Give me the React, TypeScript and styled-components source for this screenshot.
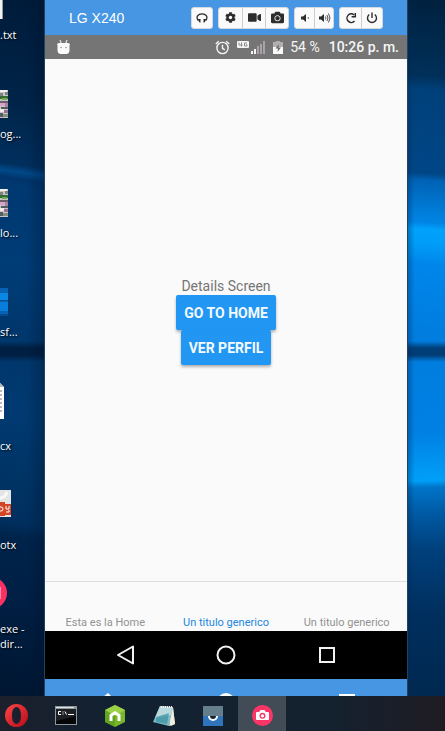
import React from "react";
import styled, { createGlobalStyle } from "styled-components";
import { FaCog, FaVideo, FaCamera } from "react-icons/fa";

const GlobalStyle = createGlobalStyle`
  *, *::before, *::after { box-sizing: border-box; }
  body { margin: 0; font-family: Roboto, sans-serif; background: #001c3a; }
  button { font: inherit; border: 0; padding: 0; margin: 0; background: none; cursor: pointer; }
  svg { display: block; flex: none; }
`;

const Desktop = styled.div`
  display: grid;
  grid-template-rows: minmax(0, 1fr) 35px;
  height: 100vh;
  overflow: hidden;
`;

const Workspace = styled.div`
  display: grid;
  grid-template-columns: 45px minmax(0, 1fr) 38px;
  min-height: 0;
`;

const IconColumn = styled.div`
  display: flex;
  flex-direction: column;
  justify-content: flex-end;
  min-height: 0;
  overflow: hidden;
  padding-bottom: 45px;
  border-right: 1px solid #24425e;
  background:
    linear-gradient(90deg, transparent 60%, rgba(0, 15, 40, 0.3)),
    linear-gradient(transparent 49%, #001f42 50%, #001f42 51%, transparent 52%),
    linear-gradient(188deg, transparent 24%, rgba(0, 88, 160, 0.6) 25%, transparent 26%),
    linear-gradient(188deg, #001b3a 0%, #002448 15%, #002f5e 24%, #003870 27%, #003c76 38%, #00376c 49%, #003a70 60%, #002f5e 75%, #00244c 77%, #001f44 86%, #001631 100%);
`;

const Wallpaper = styled.div`
  border-left: 1px solid #24425e;
  background:
    linear-gradient(90deg, rgba(0, 40, 84, 0.35), transparent 18%),
    linear-gradient(transparent 49%, #003f78 50%, #003c74 51%, transparent 52%),
    linear-gradient(184deg, #00213f 0%, #003059 11%, #00407a 13%, #004687 25%, #0062b4 26%, #0080de 31%, #0084e4 32%, #00a2fb 33%, #009df8 35%, #0086ea 38%, #007ddf 48%, transparent 52%),
    linear-gradient(178deg, #007ee0 52%, #0080e3 62%, #009ff8 69%, #0074c8 70%, #0058a2 74%, #00407c 79%, #002f5e 88%, #002850 100%);
`;

const Shortcut = styled.div`
  display: flex;
  flex-direction: column;
  flex: none;
  height: 99px;
`;

const ShortcutArt = styled.div<{ $low?: boolean }>`
  display: flex;
  align-items: flex-end;
  height: ${(p) => (p.$low ? 65 : 61)}px;
  margin-bottom: ${(p) => (p.$low ? 4 : 8)}px;
`;

const ShortcutLabel = styled.span`
  color: #fff;
  font: 11px/15px "Open Sans", "Noto Sans", sans-serif;
  text-shadow: 1px 1px 2px #000;
  white-space: pre;
`;

const Phone = styled.main`
  display: flex;
  flex-direction: column;
  min-height: 0;
  overflow: hidden;
  background: #fafafa;
`;

const TitleBar = styled.header`
  display: flex;
  align-items: center;
  justify-content: space-between;
  flex: none;
  height: 35px;
  padding: 0 24px;
  background: #4696e3;
`;

const DeviceName = styled.h1`
  margin: 0;
  color: #fff;
  font: 14px/20px "Liberation Sans", sans-serif;
`;

const Toolbar = styled.div`
  display: flex;
  gap: 5px;
`;

const ToolGroup = styled.div`
  display: flex;
  overflow: hidden;
  border: 1px solid #d3d9df;
  border-radius: 3px;
  background: #fafafa;
`;

const ToolButton = styled.button<{ $width: number }>`
  display: flex;
  align-items: center;
  justify-content: center;
  width: ${(p) => p.$width}px;
  height: 20px;
  color: #2d2d2d;

  & + & {
    border-left: 1px solid #ccc;
  }
`;

const StatusBar = styled.div`
  display: flex;
  align-items: center;
  flex: none;
  height: 24px;
  padding: 0 8px 0 12px;
  background: #757575;
  color: #f6f6f6;
  font-size: 14px;
  line-height: 20px;
  white-space: nowrap;
`;

const StatusInfo = styled.div`
  display: flex;
  align-items: center;
  gap: 7px;
  margin-left: auto;
`;

const Clock = styled.time`
  margin-left: 2px;
  font-weight: 500;
`;

const Screen = styled.section`
  display: flex;
  flex: 1;
  flex-direction: column;
  align-items: center;
  justify-content: center;
  min-height: 0;
  padding-top: 2px;
`;

const ScreenText = styled.p`
  margin: 0;
  color: #757575;
  font-size: 14px;
  line-height: 18px;
`;

const ActionButton = styled.button`
  height: 35px;
  padding: 0 8px;
  border-radius: 2px;
  background: #2196f3;
  box-shadow: 0 2px 3px rgba(0, 0, 0, 0.3);
  color: #f4faff;
  font-size: 14px;
  font-weight: 700;
  line-height: 20px;
  text-transform: uppercase;
`;

const TabBar = styled.nav`
  display: grid;
  grid-template-columns: repeat(3, 1fr);
  flex: none;
  height: 50px;
  border-top: 1px solid #dedede;
`;

const Tab = styled.button<{ $active?: boolean }>`
  display: flex;
  align-items: flex-end;
  justify-content: center;
  color: ${(p) => (p.$active ? "#2187e0" : "#929292")};
  font-size: 11px;
  line-height: 16px;
`;

const SystemBar = styled.nav`
  display: grid;
  grid-template-columns: repeat(3, 1fr);
  flex: none;
  height: 48px;
  padding: 0 30px;
  background: #000;
`;

const MirrorBar = styled.nav`
  display: grid;
  grid-template-columns: repeat(3, 1fr);
  flex: none;
  height: 17px;
  overflow: hidden;
  background: #4696e3;
`;

const NavKey = styled.button<{ $top?: boolean }>`
  display: flex;
  align-items: ${(p) => (p.$top ? "flex-start" : "center")};
  justify-content: center;
  padding-top: ${(p) => (p.$top ? 14 : 0)}px;
  color: #f2f2f2;
`;

const Taskbar = styled.footer`
  display: flex;
  gap: 1px;
  background: linear-gradient(90deg, #1b202c, #122131 25%, #14212e 75%, #201c23);
`;

const TaskButton = styled.button<{ $active?: boolean }>`
  display: flex;
  align-items: center;
  justify-content: center;
  width: 48px;
  padding-top: 4px;
  background: ${(p) => (p.$active ? "#414c57" : "transparent")};

  &:first-child {
    width: 33px;
    margin-right: 8px;
  }
`;

const PhotoStack = () => (
  <svg width="8" height="28" viewBox="0 0 8 28" aria-hidden="true">
    <path d="M0 0h8v28H0z" fill="#c9c4c4" />
    <path d="M0 0h7v2H0z" fill="#f2f0ee" />
    <path d="M0 3h3v3H0zM5 2h3v3H5z" fill="#7d8580" />
    <path d="M0 6h8v3H0z" fill="#346b37" />
    <path d="M2 8h5v2H2z" fill="#6fac4c" />
    <path d="M0 11h8v2H0z" fill="#6a5f68" />
    <path d="M0 13h5v3H0z" fill="#dba3cc" />
    <path d="M5 13h3v4H5z" fill="#a884a0" />
    <path d="M1 17h7v2H1z" fill="#545b60" />
    <path d="M0 19h4v3H0z" fill="#f0e9ea" />
    <path d="M4 20h4v3H4z" fill="#9a6f91" />
    <path d="M0 23h3v4H0z" fill="#555d68" />
    <path d="M3 24h5v3H3z" fill="#83907c" />
  </svg>
);

const shortcuts = [
  {
    label: ".txt",
    art: (
      <svg width="3" height="42" aria-hidden="true">
        <path d="M0 0h3v42H0z" fill="#f2f2f2" />
        <path d="M2 0h1v42H2z" fill="#9a9a9a" />
      </svg>
    ),
  },
  { label: "og...", art: <PhotoStack /> },
  { label: "lo...", art: <PhotoStack /> },
  {
    label: "sf...",
    art: (
      <svg width="8" height="28" aria-hidden="true">
        <path d="M0 0h8v28H0z" fill="#0663b4" />
        <path d="M0 5h8v7H0z" fill="#0a86e4" />
        <path d="M0 14h8v9H0z" fill="#087dda" />
        <path d="M0 12h8v1H0zM0 26h8v2H0z" fill="#064c8c" />
      </svg>
    ),
  },
  {
    label: "\ncx",
    art: (
      <svg width="4" height="36" aria-hidden="true">
        <path d="M0 0l4 4v32H0z" fill="#fff" />
        <path d="M0 0l4 4H0z" fill="#b8b8b8" />
        <path d="M0 8h2M0 12h2M0 16h2M0 20h2M0 24h2M0 28h2" stroke="#777" />
      </svg>
    ),
    low: true,
  },
  {
    label: "\notx",
    art: (
      <svg width="11" height="28" viewBox="0 0 11 28" aria-hidden="true">
        <path d="M0 0h11v27H0z" fill="#e4e4e4" />
        <path d="M0 8a8 8 0 0 0 7-6" fill="none" stroke="#f9f9f9" strokeWidth="3" />
        <path d="M0 12h5v14H0zM4 14h7v11H4z" fill="#d24625" />
        <path d="M0 17h1a2 2 0 0 1 0 4H0" fill="none" stroke="#fff" />
        <path d="M6 16v3h3v-3M6 22h3v-2" fill="none" stroke="#fff" />
      </svg>
    ),
    low: true,
  },
  {
    label: "exe -\ndir...",
    art: (
      <svg width="7" height="36" aria-hidden="true">
        <circle cx="-9" cy="16" r="16" fill="#fb3163" />
        <path d="M0 10h1v12H0z" fill="#ff8fac" />
      </svg>
    ),
  },
];

const Headset = () => (
  <svg width="12" height="12" viewBox="0 0 12 12" fill="none" aria-hidden="true">
    <path d="M2 8.500C-.3 4.500 2.200 1.800 6 1.800S12.300 4.500 10 8.500" stroke="currentColor" strokeWidth="1.300" />
    <path d="M1.500 7h3v3.500h-1zM10.500 7h-3v3.500h1z" fill="currentColor" />
  </svg>
);

const VolumeLow = () => (
  <svg width="10" height="12" viewBox="0 0 10 12" fill="none" aria-hidden="true">
    <path d="M1 4.500h2L6 2v8L3 7.500H1z" fill="currentColor" />
    <path d="M8 5q1 1 0 2" stroke="#777" />
  </svg>
);

const VolumeHigh = () => (
  <svg width="13" height="12" viewBox="0 0 13 12" fill="none" aria-hidden="true">
    <path d="M1 4.500h2L6 2v8L3 7.500H1z" fill="currentColor" />
    <path d="M7.500 4.500q1 1.500 0 3M9 3q2 3 0 6M10.500 1.500q3 4.500 0 9" stroke="#555" />
  </svg>
);

const Rotate = () => (
  <svg width="12" height="12" viewBox="0 0 12 12" fill="none" aria-hidden="true">
    <path d="M9.500 9A4.300 4.300 0 1 1 9 2.800" stroke="currentColor" strokeWidth="1.500" />
    <path d="M10.300 1v3.700H6.600" stroke="currentColor" strokeWidth="1.500" />
  </svg>
);

const Power = () => (
  <svg width="12" height="12" viewBox="0 0 12 12" fill="none" aria-hidden="true">
    <path d="M3.200 2.500a4.500 4.500 0 1 0 5.600 0M6 .5V6" stroke="currentColor" strokeWidth="1.400" />
  </svg>
);

const Triangle = () => (
  <svg width="19" height="20" viewBox="0 0 19 20" fill="none" aria-hidden="true">
    <path d="M17 1.500v17L2 10z" stroke="currentColor" strokeWidth="2" strokeLinejoin="round" />
  </svg>
);

const Circle = () => (
  <svg width="20" height="20" viewBox="0 0 20 20" fill="none" aria-hidden="true">
    <circle cx="10" cy="10" r="8.500" stroke="currentColor" strokeWidth="2" />
  </svg>
);

const Square = () => (
  <svg width="18" height="18" viewBox="0 0 18 18" fill="none" aria-hidden="true">
    <path d="M2 2h14v14H2z" stroke="currentColor" strokeWidth="2" />
  </svg>
);

const AndroidHead = () => (
  <svg width="13" height="15" viewBox="0 0 13 15" aria-hidden="true">
    <path d="m3 0 1.500 4M10 0 8.500 4" stroke="#e4e4e4" strokeWidth="1.200" />
    <path d="M2 3h9q2 0 2 2h-.5v5q0 4-3.500 4H4q-3.500 0-3.500-4V5H0q0-2 2-2z" fill="#fafafa" />
    <circle cx="4" cy="7.500" r=".8" fill="#999" />
    <circle cx="9" cy="7.500" r=".8" fill="#999" />
  </svg>
);

const Alarm = () => (
  <svg width="15" height="15" viewBox="0 0 15 15" fill="none" stroke="currentColor" strokeWidth="1.400" aria-hidden="true">
    <circle cx="7.500" cy="8" r="5.600" />
    <path d="M7.500 4.700v3.600l2.300 1.500M.8 4l3-2.800M14.200 4l-3-2.800" />
  </svg>
);

const Signal = () => (
  <svg width="29" height="15" viewBox="0 0 29 15" aria-hidden="true">
    <rect y="1" width="12" height="7" rx="1" fill="#f4f4f4" />
    <path d="M4.500 2.500v4M2 2.500v2.500h3.500M10 3H7.500v3H10V4.800H9" fill="none" stroke="#8c8c8c" />
    <path d="M14 11h2v3h-2zM17 9h2v5h-2z" fill="#f4f4f4" />
    <path d="M20 6h2v8h-2zM23 4h2v10h-2zM26 1h2v13h-2z" fill="#a9a3a9" />
  </svg>
);

const Battery = () => (
  <svg width="10" height="15" viewBox="0 0 10 15" aria-hidden="true">
    <path d="M3 1h4v1h3v5H0V2h3z" fill="#b2aeb2" />
    <path d="M0 7h10v7H0z" fill="#fafafa" />
    <path d="M6 4 2.500 8.500H5L4.500 12 8 7.500H5.500z" fill="#686868" />
  </svg>
);

const Opera = () => (
  <svg width="23" height="23" viewBox="0 0 23 23" aria-hidden="true">
    <defs>
      <linearGradient id="operaRed" x1="0" y1="0" x2="1" y2="1">
        <stop stopColor="#ff4747" />
        <stop offset="1" stopColor="#b60a18" />
      </linearGradient>
    </defs>
    <path
      fillRule="evenodd"
      fill="url(#operaRed)"
      d="M11.500 0a11.500 11.500 0 1 0 0 23 11.500 11.500 0 0 0 0-23zm0 3c3 0 4.500 4 4.500 8.500S14.500 20 11.500 20 7 16 7 11.500 8.500 3 11.500 3z"
    />
  </svg>
);

const Terminal = () => (
  <svg width="22" height="19" viewBox="0 0 22 19" aria-hidden="true">
    <path d="M0 0h22v19H0z" fill="#8e969c" />
    <path d="M1 1h18v1H1z" fill="#dce4ea" />
    <path d="M1 3h20v15H1z" fill="#050607" />
    <path d="M1 3h20v7L1 15z" fill="#1d2022" />
    <path d="M6 5.500H3.500v3H6M8 5.500v1M8 7.500v1M10 5.500l1.500 3M13 8.500h6" fill="none" stroke="#fff" />
  </svg>
);

const Hexagon = () => (
  <svg width="20" height="22" viewBox="0 0 20 22" aria-hidden="true">
    <path d="m10 0 10 5v12l-10 5-10-5V5z" fill="#77b62a" />
    <path d="m10 0 10 5-10 6L0 5z" fill="#9bd147" />
    <path d="M0 17V5l10 6v11z" fill="#5c9b20" opacity=".7" />
    <path d="M4.500 9.500 10 6l5.500 3.500V16h-3v-5L10 9.500 7.500 11v5h-3z" fill="#fff" />
  </svg>
);

const Notepad = () => (
  <svg width="23" height="22" viewBox="0 0 23 22" aria-hidden="true">
    <path d="m8 1 12 1 2 17-4 2z" fill="#d8d2b9" />
    <path d="M7 1 20 3l-4 18L0 17z" fill="#7fbac8" />
    <path d="m7 1 13 2-2 7L2 13z" fill="#b9d9dd" />
    <path d="M3 12 16 8l-2 11-11-2z" fill="#328d9d" opacity=".65" />
    <path d="m20 3-4 18 6-2z" fill="#f1f0df" />
    <path d="M8 2h11" stroke="#eee" strokeWidth="2" strokeDasharray="1 1" />
  </svg>
);

const EyeApp = () => (
  <svg width="20" height="20" viewBox="0 0 20 20" aria-hidden="true">
    <path d="M0 0h20v10H0z" fill="#647f8b" />
    <path d="M0 10h20v10H0z" fill="#2e75bd" />
    <path d="M5 10h10a5 5 0 0 1-10 0z" fill="#fff" />
    <path d="M7 10h6a3 3 0 0 1-6 0z" fill="#182634" />
  </svg>
);

const Recorder = () => (
  <svg width="21" height="21" viewBox="0 0 21 21" aria-hidden="true">
    <circle cx="10.500" cy="10.500" r="10.500" fill="#fc3566" />
    <path d="M4.500 7.500h3l1-2h4l1 2h3v7h-12z" fill="#fff" stroke="#fff" strokeLinejoin="round" />
    <circle cx="10.500" cy="10.800" r="2.300" fill="#fff" stroke="#fc3566" strokeWidth="1.400" />
  </svg>
);

const toolGroups = [
  { width: 20, tools: [{ label: "Support", icon: <Headset /> }] },
  {
    width: 23,
    tools: [
      { label: "Settings", icon: <FaCog size={11} /> },
      { label: "Record video", icon: <FaVideo size={13} /> },
      { label: "Take screenshot", icon: <FaCamera size={13} /> },
    ],
  },
  {
    width: 19,
    tools: [
      { label: "Volume down", icon: <VolumeLow /> },
      { label: "Volume up", icon: <VolumeHigh /> },
    ],
  },
  {
    width: 21,
    tools: [
      { label: "Rotate", icon: <Rotate /> },
      { label: "Power", icon: <Power /> },
    ],
  },
];

const tabs = ["Esta es la Home", "Un titulo generico", "Un titulo generico"];

const navKeys = [
  { label: "Back", icon: <Triangle /> },
  { label: "Home", icon: <Circle /> },
  { label: "Recent apps", icon: <Square /> },
];

const mirrorKeys = [
  {
    label: "Device back",
    icon: (
      <svg width="12" height="16" aria-hidden="true">
        <path d="M9 0 12 3v13L4 4z" fill="#fff" />
      </svg>
    ),
  },
  {
    label: "Device home",
    icon: (
      <svg width="18" height="18" aria-hidden="true">
        <circle cx="9" cy="9" r="9" fill="#fff" />
      </svg>
    ),
  },
  {
    label: "Device recent apps",
    icon: (
      <svg width="16" height="16" aria-hidden="true">
        <path d="M0 1h16v15H0z" fill="#fff" />
      </svg>
    ),
  },
];

const tasks = [
  { label: "Opera", icon: <Opera /> },
  { label: "Command prompt", icon: <Terminal /> },
  { label: "Emulator", icon: <Hexagon /> },
  { label: "Notepad", icon: <Notepad /> },
  { label: "Vysor", icon: <EyeApp /> },
  { label: "Screen recorder", icon: <Recorder />, active: true },
];

export default function App() {
  return (
    <>
      <GlobalStyle />
      <Desktop>
        <Workspace>
          <IconColumn>
            {shortcuts.map((item) => (
              <Shortcut key={item.label}>
                <ShortcutArt $low={item.low}>{item.art}</ShortcutArt>
                <ShortcutLabel>{item.label}</ShortcutLabel>
              </Shortcut>
            ))}
          </IconColumn>

          <Phone>
            <TitleBar>
              <DeviceName>LG X240</DeviceName>
              <Toolbar>
                {toolGroups.map((group) => (
                  <ToolGroup key={group.width}>
                    {group.tools.map((tool) => (
                      <ToolButton key={tool.label} aria-label={tool.label} $width={group.width}>
                        {tool.icon}
                      </ToolButton>
                    ))}
                  </ToolGroup>
                ))}
              </Toolbar>
            </TitleBar>

            <StatusBar>
              <AndroidHead />
              <StatusInfo>
                <Alarm />
                <Signal />
                <Battery />
                <span>54 %</span>
                <Clock>10:26 p. m.</Clock>
              </StatusInfo>
            </StatusBar>

            <Screen>
              <ScreenText>Details Screen</ScreenText>
              <ActionButton>Go to Home</ActionButton>
              <ActionButton>Ver perfil</ActionButton>
            </Screen>

            <TabBar aria-label="Tabs">
              {tabs.map((tab, index) => (
                <Tab key={index} $active={index === 1}>
                  {tab}
                </Tab>
              ))}
            </TabBar>

            <SystemBar aria-label="System">
              {navKeys.map((key) => (
                <NavKey key={key.label} aria-label={key.label}>
                  {key.icon}
                </NavKey>
              ))}
            </SystemBar>

            <MirrorBar aria-label="Device controls">
              {mirrorKeys.map((key) => (
                <NavKey key={key.label} aria-label={key.label} $top>
                  {key.icon}
                </NavKey>
              ))}
            </MirrorBar>
          </Phone>

          <Wallpaper />
        </Workspace>

        <Taskbar>
          {tasks.map((task) => (
            <TaskButton key={task.label} aria-label={task.label} $active={task.active}>
              {task.icon}
            </TaskButton>
          ))}
        </Taskbar>
      </Desktop>
    </>
  );
}
